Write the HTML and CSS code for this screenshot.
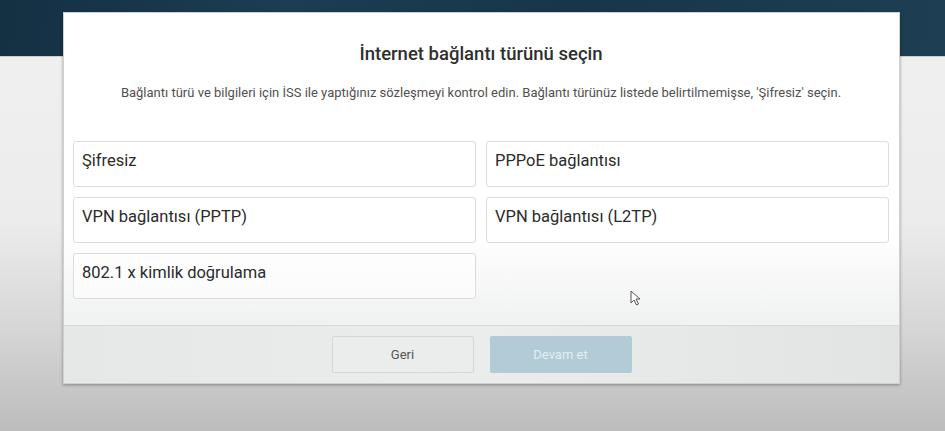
FILE: index.html
```html
<!DOCTYPE html>
<html lang="tr">
<head>
    <meta charset="UTF-8">
    <meta name="viewport" content="width=device-width, initial-scale=1.0">
    <title>İnternet bağlantı türü</title>
    <link rel="stylesheet" href="styles.css">
</head>
<body>
    <div class="top-band"></div>
    <div class="dialog">
        <div class="dialog-body">
            <h1>İnternet bağlantı türünü seçin</h1>
            <p class="hint">Bağlantı türü ve bilgileri için İSS ile yaptığınız sözleşmeyi kontrol edin. Bağlantı türünüz listede belirtilmemişse, 'Şifresiz' seçin.</p>
            <div class="options">
                <div class="option">Şifresiz</div>
                <div class="option">PPPoE bağlantısı</div>
                <div class="option">VPN bağlantısı (PPTP)</div>
                <div class="option">VPN bağlantısı (L2TP)</div>
                <div class="option">802.1 x kimlik doğrulama</div>
            </div>
        </div>
        <div class="dialog-footer">
            <button class="btn btn-back">Geri</button>
            <button class="btn btn-next" disabled>Devam et</button>
        </div>
        <!-- mouse pointer in the capture -->
        <svg class="pointer" width="12" height="16" viewBox="0 0 12 16">
            <path d="M1 1 L1 13 L4 10 L6.5 15 L8.5 14 L6 9 L10 9 Z" fill="#fff" stroke="#555" stroke-width="1"/>
        </svg>
    </div>
</body>
</html>
```

FILE: styles.css
```css
html, body {
    height: 100%;
}

body {
    margin: 0;
    font-family: Roboto, 'Liberation Sans', Arial, sans-serif;
    background: linear-gradient(to bottom, #f1f1f1 0, #ececec 220px, #d6d6d6 330px, #bcbcbc 100%);
    position: relative;
    overflow: hidden;
}

.top-band {
    height: 56px;
    background: linear-gradient(100deg, #143043 0%, #1c3d52 30%, #173649 60%, #1e3e53 100%);
    border-bottom: 1px solid #c9d0d4;
}

.dialog {
    position: absolute;
    top: 12px;
    left: 63px;
    width: 837px;
    background: #fff;
    box-shadow: 0 1px 3px rgba(0, 0, 0, 0.35);
    border: 1px solid #d0d0d0;
    box-sizing: border-box;
}

.dialog-body {
    padding: 29px 10px 26px 9px;
    background: linear-gradient(to bottom, #ffffff 0, #ffffff 220px, #f0f1f1 100%);
}

h1 {
    margin: 0;
    text-align: center;
    font-size: 18.5px;
    line-height: 24px;
    font-weight: 500;
    color: #2f2f2f;
}

.hint {
    margin: 18px 0 0;
    text-align: center;
    font-size: 13px;
    line-height: 17px;
    color: #505050;
}

.options {
    margin-top: 40px;
    display: grid;
    grid-template-columns: 1fr 1fr;
    column-gap: 10px;
    row-gap: 10px;
}

.option {
    height: 46px;
    box-sizing: border-box;
    border: 1px solid #dcdcdc;
    border-radius: 3px;
    padding: 9px 8px 0;
    font-size: 16.5px;
    line-height: 20px;
    color: #2b2b2b;
    background: rgba(255, 255, 255, 0.6);
}

.dialog-footer {
    border-top: 1px solid #d6dada;
    background: linear-gradient(to right, #e6e8e8, #ebecec 50%, #e2e3e3);
    display: flex;
    justify-content: center;
    gap: 16px;
    padding: 10px 0;
}

.btn {
    width: 142px;
    height: 37px;
    font-family: inherit;
    font-size: 13px;
    border-radius: 2px;
}

.btn-back {
    background: #ebecec;
    border: 1px solid #d5d7d7;
    color: #555;
}

.btn-next {
    background: #b1cbd7;
    border: 1px solid #b1cbd7;
    color: #e4eef3;
}

.pointer {
    position: absolute;
    left: 566px;
    top: 277px;
}
```
